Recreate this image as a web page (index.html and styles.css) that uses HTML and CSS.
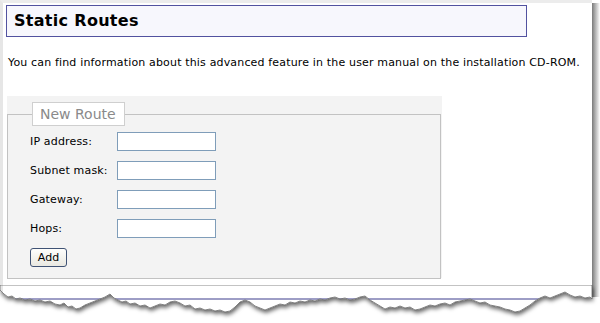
FILE: index.html
```html
<!DOCTYPE html>
<html lang="en">
<head>
  <meta charset="UTF-8">
  <title>Static Routes</title>
  <link rel="stylesheet" href="styles.css">
</head>
<body>

<div class="wrap">
  <div class="sheet">
    <h1 class="title">Static Routes</h1>
    <p class="note">You can find information about this advanced feature in the user manual on the installation CD-ROM.</p>

    <div class="panel">
      <fieldset class="route">
        <legend>New Route</legend>
        <div class="rows">
          <label for="ip">IP address:</label>
          <input type="text" id="ip" name="ip">
          <label for="mask">Subnet mask:</label>
          <input type="text" id="mask" name="mask">
          <label for="gateway">Gateway:</label>
          <input type="text" id="gateway" name="gateway">
          <label for="hops">Hops:</label>
          <input type="text" id="hops" name="hops">
        </div>
        <button type="button" class="add">Add</button>
      </fieldset>
    </div>
  </div>
  <div class="shadow"></div>
</div>

<svg class="tear" width="600" height="38" viewBox="0 0 600 38">
  <defs>
    <filter id="drop" x="-5%" y="-50%" width="110%" height="250%">
      <feDropShadow dx="1" dy="3" stdDeviation="2" flood-color="#000" flood-opacity="0.6"/>
    </filter>
    <clipPath id="paper">
      <path id="edge" d="M0,0 L0,5 L4,9 L8,12 L12,11 L16,14 L20,13 L25,15 L30,14 L35,16 L40,15 L45,17 L50,16 L55,19 L60,20 L64,18 L68,22 L72,21 L76,24 L80,23 L85,20 L90,18 L95,16 L100,14 L105,12 L110,9 L114,13 L118,15 L122,17 L126,16 L130,19 L135,18 L140,21 L145,20 L150,23 L155,21 L160,19 L165,20 L170,17 L175,16 L180,18 L185,21 L190,20 L195,24 L200,23 L205,25 L210,24 L215,26 L220,25 L225,27 L230,26 L235,22 L240,17 L245,15 L250,17 L255,21 L260,23 L265,25 L270,23 L275,21 L280,19 L285,20 L290,17 L295,18 L300,16 L305,17 L310,15 L315,16 L320,14 L325,15 L330,13 L335,12 L340,14 L345,13 L350,15 L355,14 L360,12 L365,11 L370,15 L375,18 L380,21 L385,24 L390,22 L395,23 L400,21 L405,23 L410,22 L415,25 L420,24 L425,22 L430,20 L435,21 L440,19 L445,18 L450,20 L455,17 L460,16 L465,15 L470,14 L475,16 L480,18 L485,17 L490,20 L495,21 L500,22 L505,24 L510,25 L515,27 L520,26 L525,23 L530,20 L535,16 L540,13 L545,11 L550,13 L555,11 L560,9 L565,7 L570,10 L575,12 L580,11 L585,13 L590,12 L592,14 L592,0 Z"/>
    </clipPath>
    <linearGradient id="side" x1="0" x2="1" y1="0" y2="0">
      <stop offset="0" stop-color="#7a7a7a"/>
      <stop offset="1" stop-color="#ffffff"/>
    </linearGradient>
  </defs>
  <rect x="592" y="0" width="8" height="12" fill="url(#side)"/>
  <use href="#edge" fill="#fff" filter="url(#drop)"/>
  <g clip-path="url(#paper)">
    <rect x="0" y="0" width="3" height="38" fill="#e6e6e6"/>
    <line x1="0" y1="14" x2="592" y2="14" stroke="#3c3c8c" stroke-width="1"/>
  </g>
  <use href="#edge" fill="none" stroke="#6a6a6a" stroke-width="0.8"/>
</svg>

</body>
</html>
```

FILE: styles.css
```css
body { margin: 0; background: #fff; font-family: "DejaVu Sans", Verdana, sans-serif; font-size: 11px; letter-spacing: 0.16px; color: #000; }

.wrap { display: flex; }
.sheet { width: 592px; height: 285px; box-sizing: border-box; border-left: 3px solid #e6e6e6; border-top: 3px solid #ececec; background: #fff; overflow: hidden; }
.shadow { width: 8px; margin-top: 3px; background: linear-gradient(to right, #7a7a7a, #fff); }

.title { margin: 2px 0 0 3px; width: 521px; height: 32px; box-sizing: border-box; padding-left: 7px;
  border: 1px solid #5252a0; background: #f7f7fd; font-size: 16px; line-height: 30px; font-weight: bold; letter-spacing: 0.3px; }

.note { margin: 19px 0 0 5px; line-height: 13px; white-space: nowrap; }

.panel { margin: 27px 0 0 4px; width: 435px; height: 182px; box-sizing: border-box; padding-top: 6px; background: #f3f3f3; }
.route { margin: 0; width: 434px; box-sizing: border-box; padding: 6px 10px 11px 22px; border: 1px solid #c2c2c2; }
.route legend { margin-left: 2px; padding: 0 8px 0 7px; border: 1px solid #cfcfcf; background: #fff; color: #8a8a8a; font-size: 14px; line-height: 22px; letter-spacing: 0; }

.rows { display: grid; grid-template-columns: 87px 99px; row-gap: 10px; align-items: center; }
.rows label { line-height: 13px; }
.rows input { width: 99px; height: 19px; box-sizing: border-box; margin: 0; padding: 1px 3px; border: 1px solid #7f9db9; background: #fff; font: inherit; }

.add { display: block; margin-top: 10px; width: 37px; height: 19px; padding: 0; border: 1px solid #3f5274; border-radius: 3px;
  background: linear-gradient(#fefefc, #e9e8e1); font: inherit; color: #000; }

.tear { display: block; }
```
